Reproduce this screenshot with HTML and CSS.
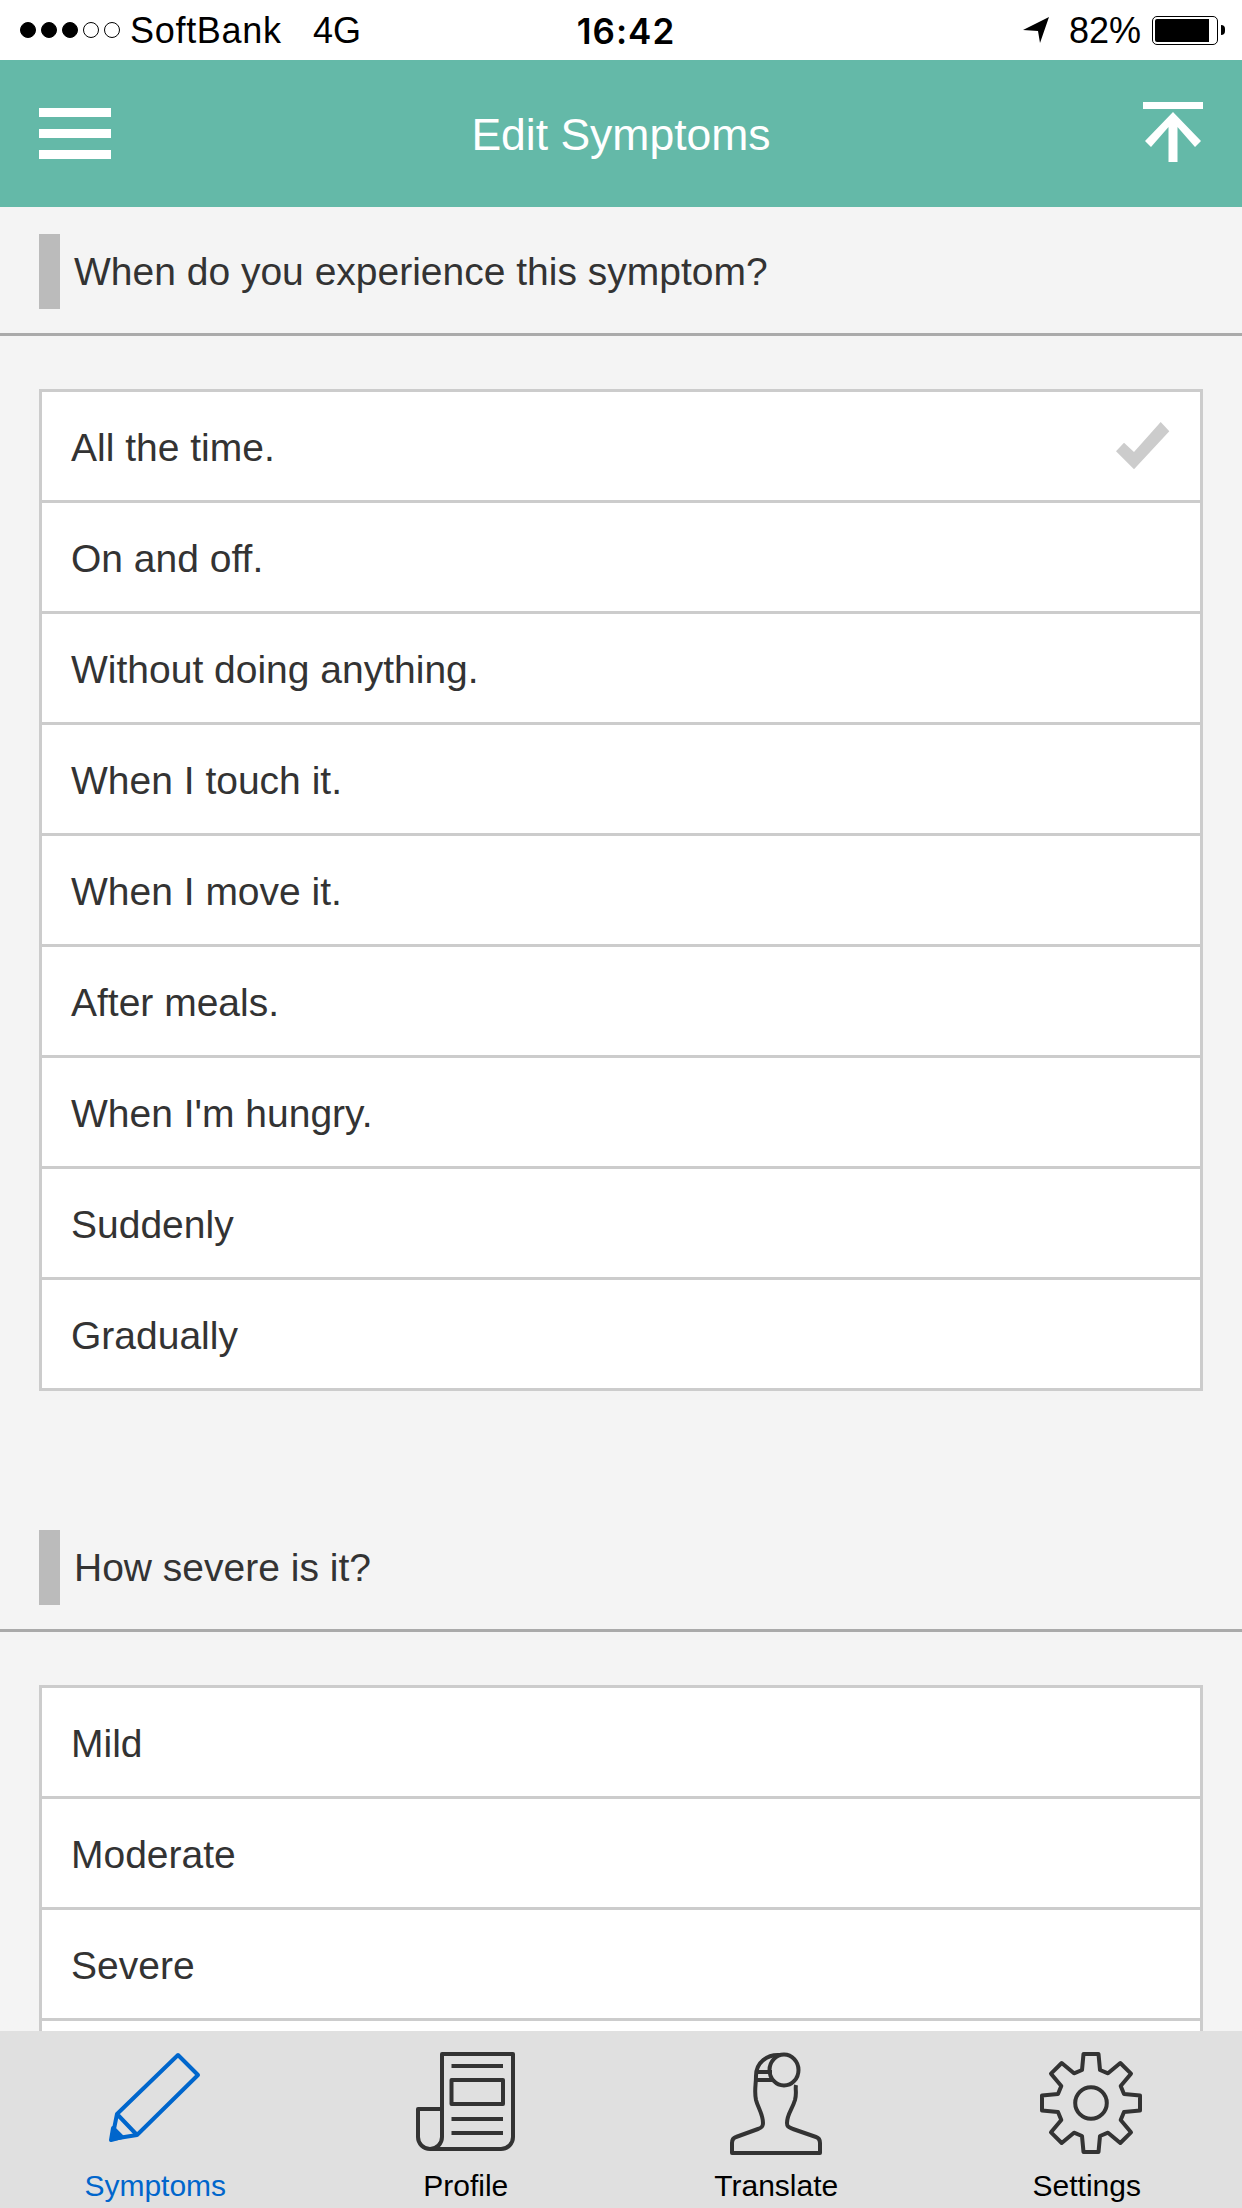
FILE: index.html
```html
<!DOCTYPE html>
<html lang="en">
<head>
<meta charset="utf-8">
<title>Edit Symptoms</title>
<link rel="stylesheet" href="styles.css">
</head>
<body>
<div class="status">
  <div class="status-left">
    <span class="signal"><i class="on"></i><i class="on"></i><i class="on"></i><i></i><i></i></span>
    <span class="carrier">SoftBank</span>
    <span class="net">4G</span>
  </div>
  <div class="time">16:42</div>
  <div class="status-right">
    <svg class="loc" viewBox="0 0 26 26"><path d="M26 0L0 13L15 14L17 26Z"/></svg>
    <span class="pct">82%</span>
    <span class="battery"><span class="battery-fill"></span></span>
    <span class="nub"></span>
  </div>
</div>
<header class="header">
  <div class="menu"><span></span><span></span><span></span></div>
  <h1 class="title">Edit Symptoms</h1>
  <svg class="upload" viewBox="0 0 60 60"><rect x="0" y="0" width="60" height="7"/><path d="M25.500 60V25L8 45L2 39L30 10L58 39L52 45L34.500 25V60Z"/></svg>
</header>
<main class="main">
  <section class="section">
    <div class="section-head"><span class="mark"></span><h2 class="section-title">When do you experience this symptom?</h2></div>
    <ul class="list">
      <li class="row"><span>All the time.</span><svg class="check" viewBox="0 0 54 48"><path d="M0 29.300L8 20.700L18 30L44.700 0L53.300 9.300L18 47.300Z"/></svg></li>
      <li class="row"><span>On and off.</span></li>
      <li class="row"><span>Without doing anything.</span></li>
      <li class="row"><span>When I touch it.</span></li>
      <li class="row"><span>When I move it.</span></li>
      <li class="row"><span>After meals.</span></li>
      <li class="row"><span>When I'm hungry.</span></li>
      <li class="row"><span>Suddenly</span></li>
      <li class="row"><span>Gradually</span></li>
    </ul>
  </section>
  <section class="section">
    <div class="section-head"><span class="mark"></span><h2 class="section-title">How severe is it?</h2></div>
    <ul class="list">
      <li class="row"><span>Mild</span></li>
      <li class="row"><span>Moderate</span></li>
      <li class="row"><span>Severe</span></li>
      <li class="row"></li>
    </ul>
  </section>
</main>
<nav class="tabs">
  <a class="tab active">
    <svg class="tab-icon" viewBox="-55 0 110 105"><path d="M23 3L43 23L-18 83L-43 87L-38 62ZM-38 62L-18 83"/><path class="solid" d="M-44 88L-42 76L-33 85Z"/></svg>
    <span class="tab-label">Symptoms</span>
  </a>
  <a class="tab">
    <svg class="tab-icon" viewBox="-55 0 110 105"><path d="M-24 85V2H47V85A12 12 0 0 1 35 97H-36A12 12 0 0 1 -48 85V57H-24M-24 85A12 12 0 0 1 -36 97"/><path d="M-14.500 14H37M-14.500 67H37M-14.500 81H37"/><rect x="-14.500" y="28" width="51.500" height="24"/></svg>
    <span class="tab-label">Profile</span>
  </a>
  <a class="tab">
    <svg class="tab-icon" viewBox="-55 0 110 105"><ellipse cx="8" cy="18" rx="14.500" ry="15.500"/><path d="M4 3C-8 2 -20 10 -20 24C-20 34 -22 38 -20 48C-18 56 -13 62 -13 71C-13 75 -15 76 -18 77L-40 85C-43 86 -44 88 -44 91V101H44V91C44 88 43 86 40 85L17 77C13 75 11 75 11 71C11 62 16 58 19 48C21 40 19 38 20 33"/><path d="M-20 20H-4M-20 28H-2"/></svg>
    <span class="tab-label">Translate</span>
  </a>
  <a class="tab">
    <svg class="tab-icon" viewBox="-55 -5 110 105"><g transform="translate(4 46)"><path d="M-9 -33L-7.500 -49H7.500L9 -33L17 -29.700L29.300 -40L40 -29.300L29.700 -17L33 -9L49 -7.500V7.500L33 9L29.700 17L40 29.300L29.300 40L17 29.700L9 33L7.500 49H-7.500L-9 33L-17 29.700L-29.300 40L-40 29.300L-29.700 17L-33 9L-49 7.500V-7.500L-33 -9L-29.700 -17L-40 -29.300L-29.300 -40L-17 -29.700Z"/><ellipse cx="0" cy="0" rx="15.800" ry="15.800"/></g></svg>
    <span class="tab-label">Settings</span>
  </a>
</nav>
</body>
</html>
```
FILE: styles.css
```css
* { box-sizing: border-box; }
html, body { margin: 0; padding: 0; }
body {
  width: 1242px;
  height: 2208px;
  display: flex;
  flex-direction: column;
  overflow: hidden;
  background: #f4f4f4;
  font-family: "Liberation Sans", Arial, sans-serif;
  color: #333;
}

/* status bar */
.status {
  flex: none;
  height: 60px;
  background: #fff;
  color: #000;
  display: grid;
  grid-template-columns: 1fr auto 1fr;
  align-items: center;
  padding: 0 17px 0 20px;
  font-family: "Liberation Sans", Arial, sans-serif;
  font-size: 36px;
}
.status-left { display: flex; align-items: center; }
.signal { display: flex; gap: 5px; margin-right: 10px; }
.signal i {
  width: 16px;
  height: 16px;
  border-radius: 50%;
  border: 1.5px solid #000;
}
.signal i.on { background: #000; }
.carrier { width: 183px; letter-spacing: 0.7px; padding-top: 2px; }
.net { padding-top: 2px; }
.time {
  font-family: Inter, "Liberation Sans", sans-serif;
  font-weight: 600;
  font-size: 35px;
  letter-spacing: 1px;
  margin-left: 7px;
  padding-top: 1px;
}
.status-right { display: flex; align-items: center; justify-content: flex-end; }
.loc { width: 26px; height: 26px; margin-right: 20px; fill: #000; }
.pct { margin-right: 11px; padding-top: 2px; }
.battery {
  width: 66px;
  height: 29px;
  border: 1.5px solid #000;
  border-radius: 5px;
  padding: 2px;
  display: flex;
}
.battery-fill { width: 54px; background: #000; border-radius: 2px 0 0 2px; }
.nub { width: 4px; height: 10px; background: #000; border-radius: 0 4px 4px 0; margin-left: 3px; }

/* header */
.header {
  flex: none;
  height: 147px;
  background: #64b9a8;
  display: grid;
  grid-template-columns: 1fr auto 1fr;
  align-items: center;
  padding: 0 39px;
}
.menu { display: flex; flex-direction: column; gap: 12px; width: 72px; }
.menu span { height: 9px; background: #fff; }
.title { margin: 0; padding-top: 2px; font-size: 44.5px; font-weight: 400; color: #fff; }
.upload { width: 60px; height: 60px; fill: #fff; justify-self: end; margin-top: -3px; }

/* sections */
.main { flex: 1; min-height: 0; overflow: hidden; }
.section { margin-bottom: 112px; }
.section-head {
  display: flex;
  align-items: center;
  gap: 14px;
  padding: 27px 39px 24px;
  border-bottom: 3px solid #aaa;
}
.mark { width: 21px; height: 75px; background: #bbb; }
.section-title { margin: 0; font-size: 39px; font-weight: 400; color: #333; }
.list {
  list-style: none;
  margin: 53px 39px 0;
  padding: 0;
  border: 3px solid #ccc;
  background: #fff;
}
.row {
  height: 111px;
  padding: 0 0 0 29px;
  display: flex;
  align-items: center;
  justify-content: space-between;
  font-size: 39px;
  color: #333;
  border-bottom: 3px solid #ccc;
}
.row span { padding-top: 3px; }
.row:last-child { height: 108px; border-bottom: 0; }
.check { width: 54px; height: 48px; fill: #ccc; margin-right: 30px; margin-top: -1px; }

/* tab bar */
.tabs {
  flex: none;
  height: 177px;
  background: #e0e0e0;
  display: grid;
  grid-template-columns: repeat(4, 1fr);
  padding-top: 21px;
}
.tab {
  display: flex;
  flex-direction: column;
  align-items: center;
  color: #000;
}
.tab-icon {
  width: 110px;
  height: 105px;
  fill: none;
  stroke: #333;
  stroke-width: 4;
  stroke-linejoin: round;
  overflow: visible;
}
.tab-label { font-size: 30px; line-height: 36px; margin-top: 11px; }
.tab.active { color: #0066cc; }
.tab.active .tab-icon { stroke: #0066cc; }
.tab.active .solid { fill: #0066cc; }
```
